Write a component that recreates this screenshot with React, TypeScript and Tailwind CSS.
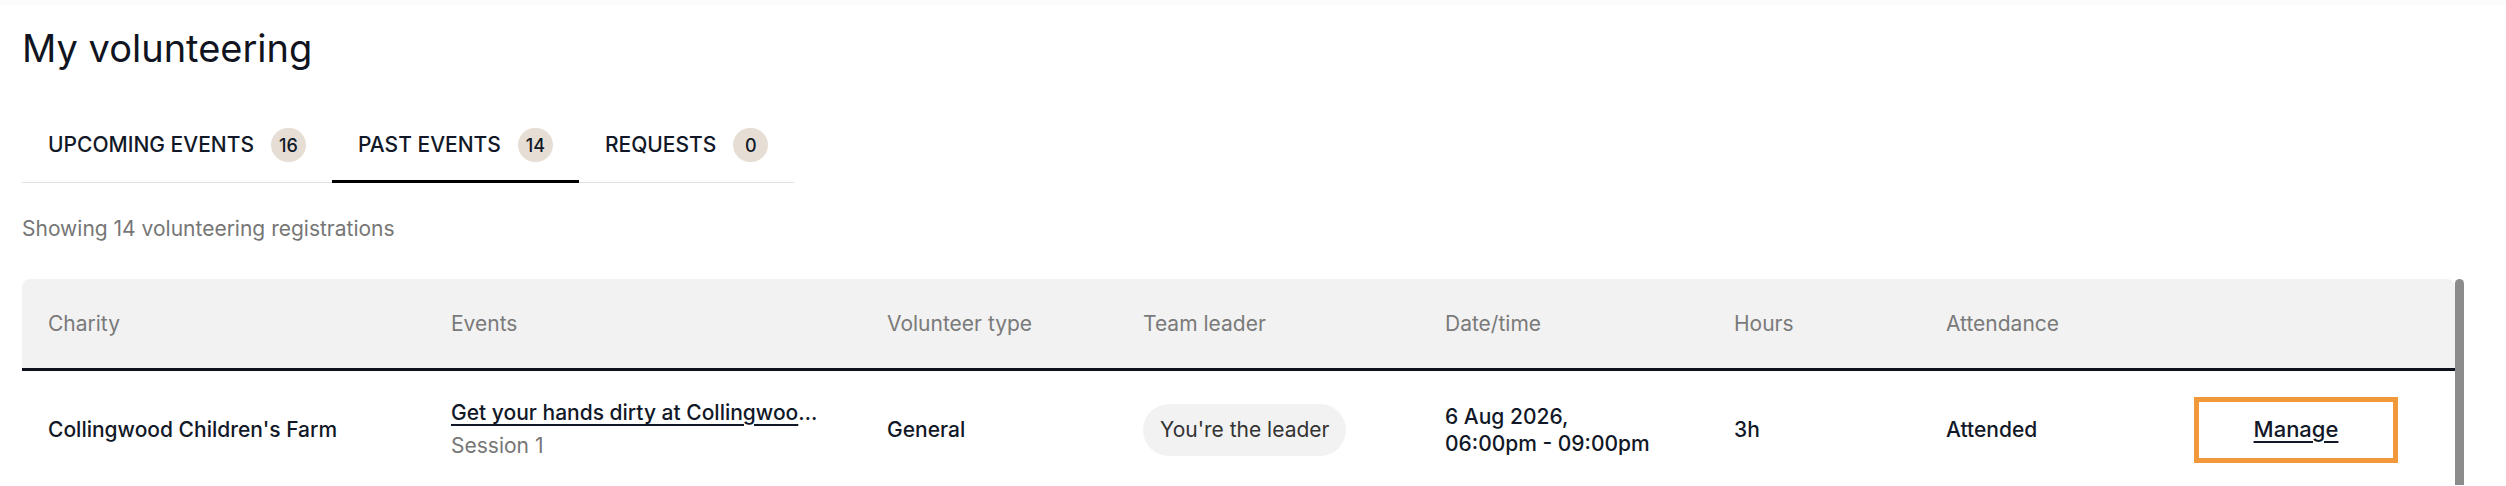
import React from "react";

const cols = [
  "w-[403px]",
  "w-[436px]",
  "w-[256px]",
  "w-[302px]",
  "w-[289px]",
  "w-[212px]",
  "w-[248px]",
  "w-[287px]",
];

function Tab({ label, count, active }: { label: string; count: number; active?: boolean }) {
  return (
    <div
      className={`flex items-center gap-[17px] px-[26px] py-[18px] border-b-[3px] -mb-px ${
        active ? "border-black" : "border-transparent"
      }`}
    >
      <span className="text-[21px] font-medium leading-[24px] text-[#111827]">{label}</span>
      <span className="flex h-[34px] w-[35px] items-center justify-center rounded-full bg-[#e6ded5] text-[18px] font-medium text-[#111827]">
        {count}
      </span>
    </div>
  );
}

export default function App() {
  return (
    <div className="h-[486px] w-[2506px] overflow-hidden bg-white font-['Inter',sans-serif] text-[#111827]">
      <div className="h-[5px] bg-[#fcfcfc]" />
      <div className="pl-[22px] pr-[42px]">
        <h1 className="pt-[20px] text-[38px] font-normal leading-[46px] text-[#0f1420]">
          My volunteering
        </h1>

        <div className="mt-[39px] flex w-fit border-b border-[#e2e2e2]">
          <Tab label="UPCOMING EVENTS" count={16} />
          <Tab label="PAST EVENTS" count={14} active />
          <Tab label="REQUESTS" count={0} />
        </div>

        <p className="mt-[32px] text-[21px] leading-[28px] text-[#767676]">
          Showing 14 volunteering registrations
        </p>

        <div className="mt-[36px] flex">
          <div className="flex-1">
            <div className="flex h-[92px] items-center rounded-t-[8px] border-b-[3px] border-[#0d111b] bg-[#f2f2f2] text-[21px] text-[#7a7a7a]">
              {["Charity", "Events", "Volunteer type", "Team leader", "Date/time", "Hours", "Attendance", ""].map(
                (h, i) => (
                  <div key={i} className={`${cols[i]} px-[26px]`}>
                    {h}
                  </div>
                )
              )}
            </div>
            <div className="flex h-[114px] items-center pt-[3px] text-[21px] font-medium text-[#111827]">
              <div className={`${cols[0]} px-[26px]`}>Collingwood Children's Farm</div>
              <div className={`${cols[1]} px-[26px]`}>
                <div className="max-w-[377px] truncate leading-[28px] underline underline-offset-[4px]">
                  Get your hands dirty at Collingwood Children's Farm
                </div>
                <div className="mt-[5px] font-normal leading-[28px] text-[#767676]">Session 1</div>
              </div>
              <div className={`${cols[2]} px-[26px]`}>General</div>
              <div className={`${cols[3]} px-[26px]`}>
                <span className="inline-flex h-[52px] items-center rounded-full bg-[#f2f2f2] px-[17px] font-normal text-[#333333]">
                  You're the leader
                </span>
              </div>
              <div className={`${cols[4]} px-[26px] leading-[27px]`}>
                <div>6 Aug 2026,</div>
                <div>06:00pm - 09:00pm</div>
              </div>
              <div className={`${cols[5]} px-[26px]`}>3h</div>
              <div className={`${cols[6]} px-[26px]`}>Attended</div>
              <div className={`${cols[7]} px-[26px]`}>
                <div className="flex h-[66px] w-[204px] items-center justify-center border-[5px] border-[#f0983a]">
                  <span className="text-[22px] underline underline-offset-[4px]">Manage</span>
                </div>
              </div>
            </div>
          </div>
          <div className="w-[9px] rounded-t-full bg-[#8c8c8c]" />
        </div>
      </div>
    </div>
  );
}
